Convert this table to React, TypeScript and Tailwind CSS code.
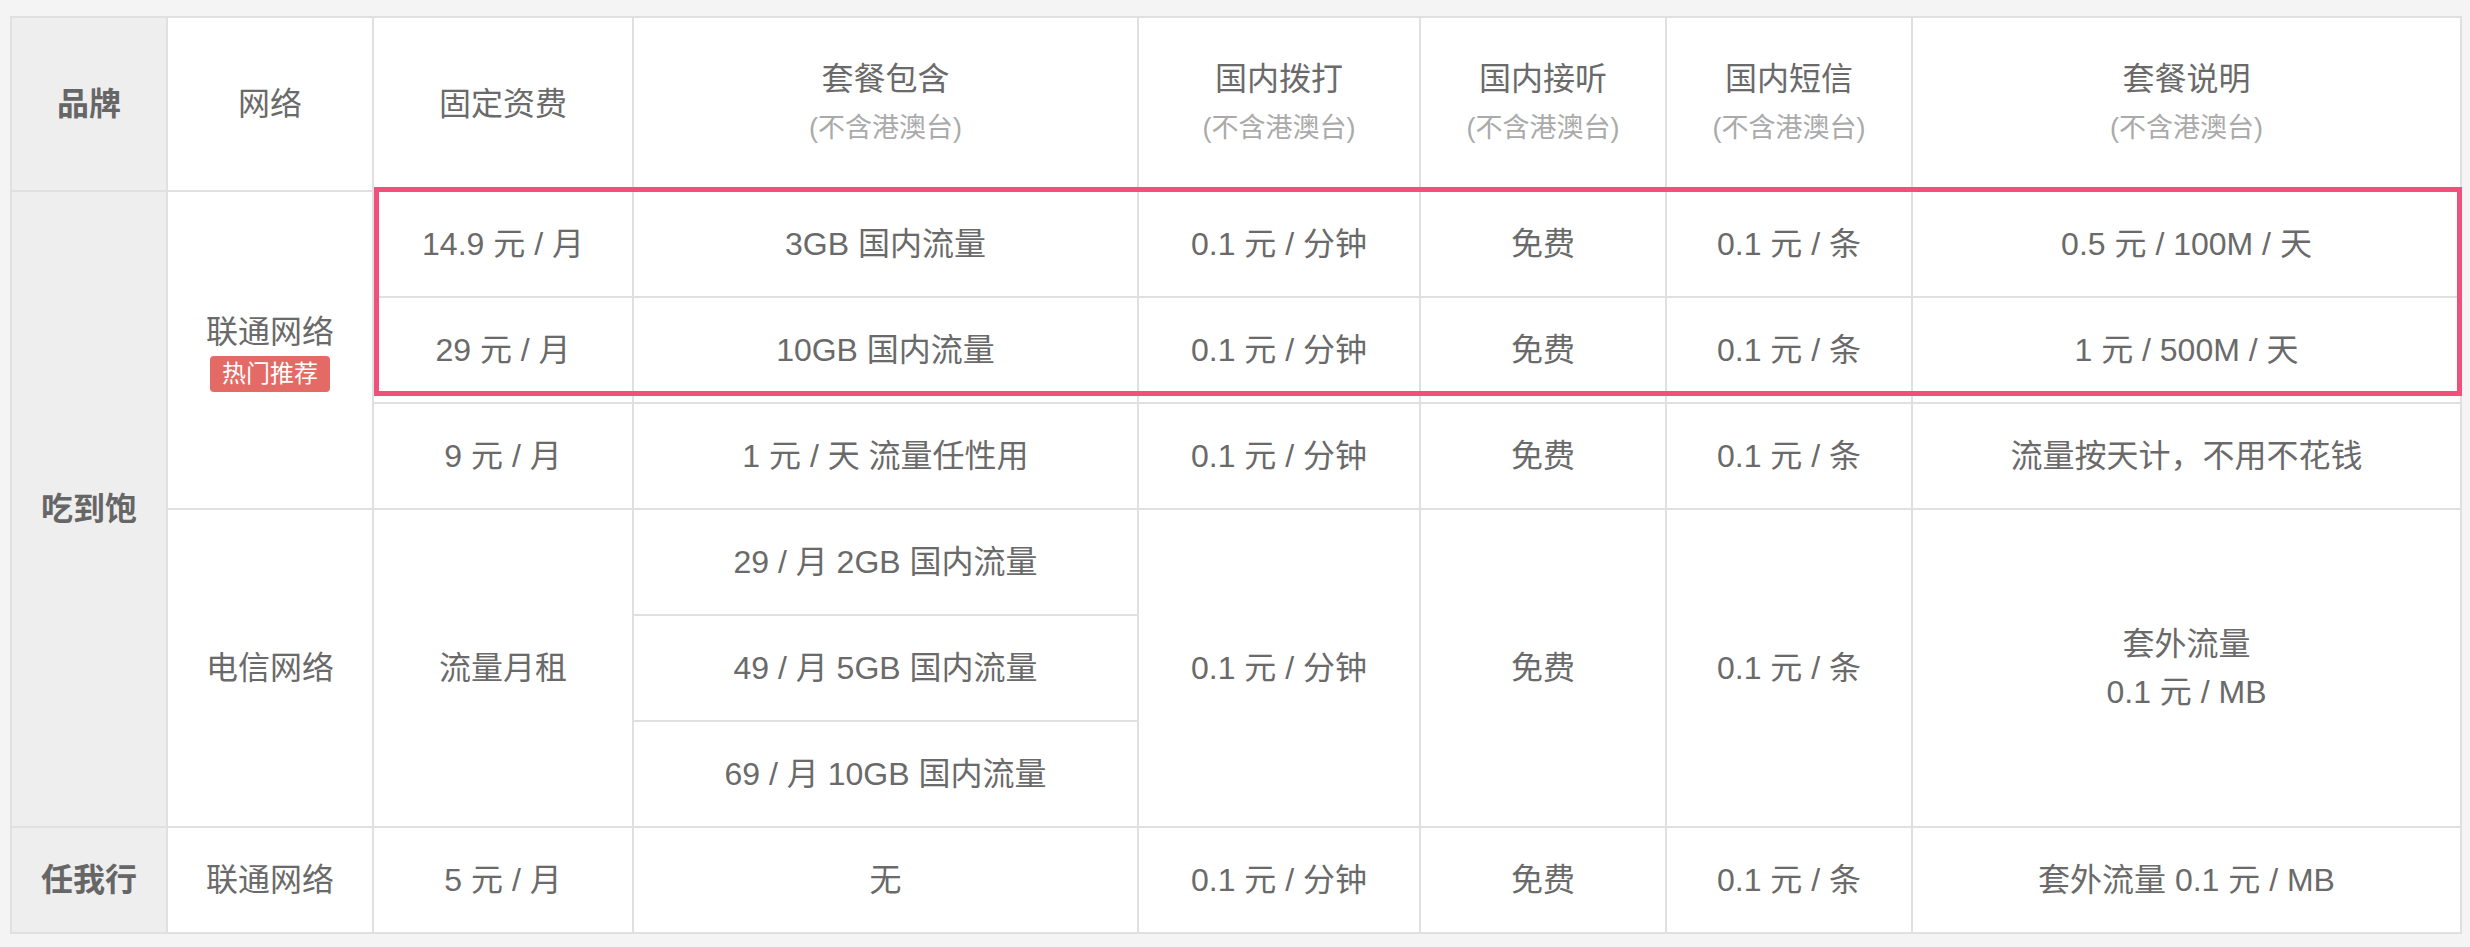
import React from "react";

const cell =
  "p-0 align-middle text-center border-r-2 border-b-2 border-[#e0e0e0] text-[32px] leading-[48px] text-[#6a6a6a] font-normal";
const brand =
  "p-0 align-middle text-center border-r-2 border-b-2 border-[#e0e0e0] text-[32px] leading-[48px] text-[#666] font-bold bg-[#eeeeee]";

function Head({ title, sub }: { title: string; sub?: boolean }) {
  return (
    <th className={cell}>
      <div>{title}</div>
      {sub && <div className="text-[27px] leading-[50px] text-[#aaaaaa]">(不含港澳台)</div>}
    </th>
  );
}

export default function App() {
  return (
    <div className="min-h-screen bg-[#f4f4f4] pt-[16px] pl-[10px] font-['Liberation_Sans','Noto_Sans_CJK_SC',sans-serif]">
      <div className="relative w-fit">
        <table className="table-fixed border-separate border-spacing-0 border-l-2 border-t-2 border-[#e0e0e0] bg-white w-[2452px]">
          <colgroup>
            <col className="w-[156px]" />
            <col className="w-[206px]" />
            <col className="w-[260px]" />
            <col className="w-[505px]" />
            <col className="w-[282px]" />
            <col className="w-[246px]" />
            <col className="w-[246px]" />
            <col className="w-[549px]" />
          </colgroup>
          <thead>
            <tr className="h-[174px]">
              <th className={brand}>品牌</th>
              <Head title="网络" />
              <Head title="固定资费" />
              <Head title="套餐包含" sub />
              <Head title="国内拨打" sub />
              <Head title="国内接听" sub />
              <Head title="国内短信" sub />
              <Head title="套餐说明" sub />
            </tr>
          </thead>
          <tbody>
            <tr className="h-[106px]">
              <td className={brand} rowSpan={6}>吃到饱</td>
              <td className={cell} rowSpan={3}>
                <div>联通网络</div>
                <div className="flex justify-center">
                  <span className="rounded-[4px] bg-[#e46a66] px-[12px] text-[24px] leading-[36px] text-white">
                    热门推荐
                  </span>
                </div>
              </td>
              <td className={cell}>14.9 元 / 月</td>
              <td className={cell}>3GB 国内流量</td>
              <td className={cell}>0.1 元 / 分钟</td>
              <td className={cell}>免费</td>
              <td className={cell}>0.1 元 / 条</td>
              <td className={cell}>0.5 元 / 100M / 天</td>
            </tr>
            <tr className="h-[106px]">
              <td className={cell}>29 元 / 月</td>
              <td className={cell}>10GB 国内流量</td>
              <td className={cell}>0.1 元 / 分钟</td>
              <td className={cell}>免费</td>
              <td className={cell}>0.1 元 / 条</td>
              <td className={cell}>1 元 / 500M / 天</td>
            </tr>
            <tr className="h-[106px]">
              <td className={cell}>9 元 / 月</td>
              <td className={cell}>1 元 / 天 流量任性用</td>
              <td className={cell}>0.1 元 / 分钟</td>
              <td className={cell}>免费</td>
              <td className={cell}>0.1 元 / 条</td>
              <td className={cell}>流量按天计，不用不花钱</td>
            </tr>
            <tr className="h-[106px]">
              <td className={cell} rowSpan={3}>电信网络</td>
              <td className={cell} rowSpan={3}>流量月租</td>
              <td className={cell}>29 / 月 2GB 国内流量</td>
              <td className={cell} rowSpan={3}>0.1 元 / 分钟</td>
              <td className={cell} rowSpan={3}>免费</td>
              <td className={cell} rowSpan={3}>0.1 元 / 条</td>
              <td className={cell} rowSpan={3}>
                <div>套外流量</div>
                <div>0.1 元 / MB</div>
              </td>
            </tr>
            <tr className="h-[106px]">
              <td className={cell}>49 / 月 5GB 国内流量</td>
            </tr>
            <tr className="h-[106px]">
              <td className={cell}>69 / 月 10GB 国内流量</td>
            </tr>
            <tr className="h-[106px]">
              <td className={brand}>任我行</td>
              <td className={cell}>联通网络</td>
              <td className={cell}>5 元 / 月</td>
              <td className={cell}>无</td>
              <td className={cell}>0.1 元 / 分钟</td>
              <td className={cell}>免费</td>
              <td className={cell}>0.1 元 / 条</td>
              <td className={cell}>套外流量 0.1 元 / MB</td>
            </tr>
          </tbody>
        </table>
        <div className="pointer-events-none absolute left-[364px] top-[171px] h-[209px] w-[2088px] border-[5px] border-[#f0507a]" />
      </div>
    </div>
  );
}
